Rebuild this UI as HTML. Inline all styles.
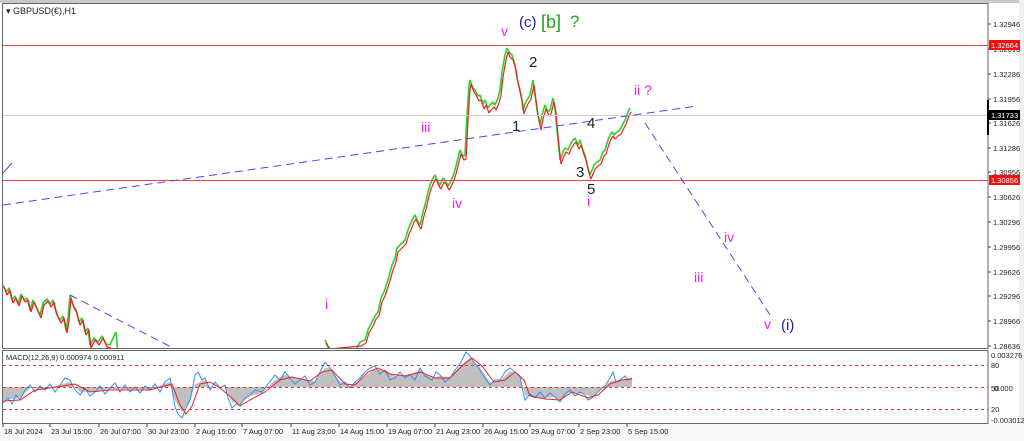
<!DOCTYPE html>
<html><head><meta charset="utf-8"><style>
html,body{margin:0;padding:0;background:#fff;width:1024px;height:441px;overflow:hidden}
svg text{font-family:"Liberation Sans",sans-serif}
</style></head><body>
<svg width="1024" height="441" viewBox="0 0 1024 441" xmlns="http://www.w3.org/2000/svg">
<rect x="0" y="0" width="1024" height="441" fill="#fff"/>
<rect x="0" y="0" width="1024" height="3" fill="#c8c8c8"/>
<rect x="1019" y="0" width="5" height="441" fill="#f0f0f0"/>
<rect x="0" y="424" width="1024" height="17" fill="#f8f8f8"/>
<defs><clipPath id="c1"><rect x="3" y="4" width="985" height="344"/></clipPath></defs>
<g clip-path="url(#c1)" fill="none" stroke-linejoin="bevel">
<polyline stroke="#30d030" stroke-width="1.6" points="3,285 6,292 9,288 12,300 15,296 18,304 21,294 24,300 27,298 30,310 33,300 36,306 40,315 43,303 47,299 50,304 53,300 56,312 60,320 63,316 66,330 68,318 70,295 73,305 76,310 79,322 82,318 85,332 88,328 90,345 94,338 98,342 102,336 106,344 110,345 113,338 116,332 118,352"/>
<polyline stroke="#f02020" stroke-width="1.3" points="4,287 7,295 10,290 13,303 16,298 19,306 22,296 25,302 28,300 31,312 34,302 37,309 41,318 44,305 48,301 51,307 54,302 57,315 61,323 64,318 67,333 69,320 71,298 74,308 77,313 80,325 83,320 86,335 89,330 91,348 95,340 99,345 103,338 107,347 111,348"/>
<polyline stroke="#30d030" stroke-width="1.6" points="325,340 328,346 333,352 355,352 360,342 365,340 368,330 372,322 375,316 378,312 381,298 384,292 388,280 392,265 395,258 397,248 401,244 405,240 408,230 410,225 413,218 415,215 418,222 420,225 423,212 425,205 428,192 430,185 433,178 435,175 438,182 440,185 443,178 445,180 448,186 450,183 453,176 455,170 458,158 460,150 463,156 465,155 467,115 469,85 470,80 473,88 475,90 478,96 480,95 483,104 485,100 488,108 490,105 493,102 495,105 498,98 500,90 502,72 505,55 507,48 509,52 512,55 515,65 517,78 520,90 522,100 523,110 525,104 527,100 530,95 533,80 535,95 537,110 540,125 542,115 545,105 548,112 550,110 553,98 555,108 556,120 558,140 560,160 563,152 565,148 568,150 570,145 573,140 575,138 578,145 580,140 583,150 585,155 588,168 590,175 592,170 594,165 597,162 600,160 603,152 605,150 608,140 610,135 612,132 614,135 617,132 620,130 623,124 625,120 628,112 630,108"/>
<polyline stroke="#f02020" stroke-width="1.2" points="326,343 329,349 361,346 366,343 369,333 373,326 376,319 379,316 382,302 385,296 389,284 393,270 396,262 398,252 402,248 406,244 409,234 411,230 414,222 416,219 419,226 421,229 424,216 426,209 429,196 431,189 434,182 436,179 439,186 441,189 444,182 446,184 449,190 451,187 454,180 456,174 459,162 461,154 464,160 466,159 468,120 470,90 471,84 474,92 476,95 479,101 481,100 484,109 486,105 489,113 491,110 494,107 496,110 499,103 501,95 503,77 506,60 508,52 510,57 513,60 516,70 518,83 521,96 523,106 524,114 526,108 528,104 531,99 534,85 536,100 538,115 541,130 543,119 546,109 549,116 551,114 554,102 556,112 557,125 559,145 561,164 564,156 566,152 569,154 571,149 574,144 576,142 579,149 581,145 584,155 586,160 589,173 591,179 593,174 595,169 598,166 601,164 604,156 606,154 609,144 611,139 613,136 615,139 618,136 621,134 624,128 626,124 629,116 631,112"/>
</g>
<line x1="3" y1="45.5" x2="988" y2="45.5" stroke="#f04040" stroke-width="1"/>
<line x1="3" y1="180.5" x2="988" y2="180.5" stroke="#f04040" stroke-width="1"/>
<line x1="3" y1="115.5" x2="988" y2="115.5" stroke="#d0d0d0" stroke-width="1"/>
<line x1="3" y1="205" x2="697" y2="106" stroke="#4848f0" stroke-width="1" stroke-dasharray="8,5"/>
<line x1="645" y1="123" x2="772" y2="318" stroke="#4848f0" stroke-width="1" stroke-dasharray="8,5"/>
<line x1="70" y1="295" x2="173" y2="348" stroke="#4848f0" stroke-width="1" stroke-dasharray="8,5"/>
<line x1="3" y1="173" x2="12" y2="163" stroke="#4848f0" stroke-width="1"/>
<g font-size="15">
<text x="519" y="27" fill="#2020b0">(c)</text>
<text x="541" y="28" fill="#20a020" font-size="18">[b]</text>
<text x="570" y="27" fill="#20a020" font-size="17">?</text>
<text x="501" y="36" fill="#f020f0" font-size="14">v</text>
<text x="529" y="67" fill="#222">2</text>
<text x="634" y="95" fill="#f020f0" font-size="14">ii ?</text>
<text x="421" y="132" fill="#f020f0" font-size="14">iii</text>
<text x="512" y="131" fill="#222">1</text>
<text x="587" y="128" fill="#222">4</text>
<text x="576" y="177" fill="#222">3</text>
<text x="587" y="194" fill="#222">5</text>
<text x="587" y="206" fill="#f020f0" font-size="14">i</text>
<text x="452" y="208" fill="#f020f0" font-size="14">iv</text>
<text x="724" y="242" fill="#f020f0" font-size="14">iv</text>
<text x="694" y="282" fill="#f020f0" font-size="14">iii</text>
<text x="764" y="329" fill="#f020f0" font-size="14">v</text>
<text x="781" y="330" fill="#2020b0">(i)</text>
<text x="325" y="309" fill="#f020f0" font-size="14">i</text>
</g>
<text x="6" y="14" font-size="9" fill="#222">▾ GBPUSD(€),H1</text>
<rect x="2.5" y="3.5" width="985.5" height="345" fill="none" stroke="#666"/>
<rect x="2.5" y="350.5" width="985.5" height="73" fill="none" stroke="#666"/>
<!-- MACD -->
<polygon fill="#c0c0c0" points="3,387 3,400 20,398 30,388 45,389 70,382 80,392 95,391 110,389 150,389 170,382 175,400 182,412 190,402 195,384 205,380 210,388 225,386 232,402 240,404 250,396 262,393 275,380 285,375 300,379 315,381 325,368 330,368 340,382 350,386 360,380 375,369 385,370 395,376 410,375 420,370 432,378 440,376 450,377 462,364 470,358 480,368 490,382 500,381 510,371 520,376 525,395 535,398 545,398 555,397 560,400 570,392 585,394 592,397 600,391 610,381 620,380 632,378 632,387"/>
<polyline fill="none" stroke="#3090f0" stroke-width="1" points="3,403 8,398 12,404 16,395 20,400 25,390 30,385 35,392 40,386 45,390 50,384 55,392 60,385 65,378 70,380 75,390 80,395 85,388 90,396 95,392 100,386 105,394 110,388 115,383 120,392 125,385 130,392 135,387 140,393 145,386 150,390 155,384 160,392 165,382 170,378 173,395 175,407 178,414 182,418 186,408 190,400 193,386 195,375 198,372 202,380 205,378 208,385 210,390 215,382 220,388 225,385 228,398 232,408 236,404 240,405 245,398 250,395 255,390 262,392 268,384 275,375 280,380 285,372 290,378 295,384 300,380 305,376 310,385 315,382 320,372 325,362 330,368 335,376 340,385 345,382 350,388 355,382 360,378 365,372 370,368 375,366 380,374 385,370 390,380 395,378 400,372 405,378 410,375 415,380 420,368 425,376 432,380 436,372 440,375 445,382 450,378 455,370 460,364 462,360 466,352 470,356 475,364 480,370 485,378 490,385 495,380 500,380 505,372 510,368 515,372 520,376 523,392 525,400 530,394 535,398 540,392 545,398 550,393 555,397 560,402 565,394 570,390 575,396 580,392 585,395 588,400 592,398 596,394 600,390 605,386 610,378 613,372 616,382 620,380 625,376 628,380 632,378"/>
<polyline fill="none" stroke="#f02020" stroke-width="1" points="3,401 20,400 35,390 50,388 75,384 90,392 110,390 150,390 172,384 180,405 186,414 192,406 200,384 210,382 220,388 232,398 240,406 250,400 265,392 280,380 292,377 310,381 322,372 332,370 345,384 355,385 368,372 378,368 390,374 405,376 420,372 435,378 450,378 462,366 472,358 482,366 494,382 505,380 515,372 524,380 530,396 545,399 560,400 572,392 588,398 598,395 610,384 622,380 632,379"/>
<line x1="3" y1="365.5" x2="988" y2="365.5" stroke="#f03030" stroke-dasharray="3,3"/>
<line x1="3" y1="387.5" x2="988" y2="387.5" stroke="#f03030" stroke-dasharray="3,3"/>
<line x1="3" y1="409.5" x2="988" y2="409.5" stroke="#f03030" stroke-dasharray="3,3"/>
<text x="6" y="360" font-size="7.5" fill="#222">MACD(12,26,9) 0.000974 0.000911</text>
<!-- price axis -->
<g stroke="#444">
<line x1="988" y1="24" x2="991" y2="24"/><line x1="988" y1="49" x2="991" y2="49"/><line x1="988" y1="74" x2="991" y2="74"/><line x1="988" y1="99" x2="991" y2="99"/><line x1="988" y1="123" x2="991" y2="123"/><line x1="988" y1="148" x2="991" y2="148"/><line x1="988" y1="172" x2="991" y2="172"/><line x1="988" y1="197" x2="991" y2="197"/><line x1="988" y1="222" x2="991" y2="222"/><line x1="988" y1="247" x2="991" y2="247"/><line x1="988" y1="272" x2="991" y2="272"/><line x1="988" y1="296" x2="991" y2="296"/><line x1="988" y1="321" x2="991" y2="321"/><line x1="988" y1="346" x2="991" y2="346"/>
</g>
<g font-size="7.5" fill="#222">
<text x="993" y="27">1.32946</text><text x="993" y="52">1.32616</text><text x="993" y="77">1.32286</text><text x="993" y="102">1.31956</text><text x="993" y="126">1.31626</text><text x="993" y="151">1.31286</text><text x="993" y="175">1.30956</text><text x="993" y="200">1.30626</text><text x="993" y="225">1.30296</text><text x="993" y="250">1.29956</text><text x="993" y="275">1.29626</text><text x="993" y="299">1.29296</text><text x="993" y="324">1.28966</text><text x="993" y="349">1.28636</text>
</g>
<rect x="989" y="40" width="31" height="10" fill="#f01010"/>
<text x="991" y="48" font-size="7.5" fill="#fff">1.32664</text>
<rect x="989" y="110" width="31" height="10" fill="#000"/>
<text x="991" y="118" font-size="7.5" fill="#fff">1.31733</text>
<rect x="987" y="100" width="2" height="35" fill="#000"/>
<rect x="989" y="175" width="31" height="10" fill="#f01010"/>
<text x="991" y="183" font-size="7.5" fill="#fff">1.30856</text>
<g font-size="7.5" fill="#222">
<text x="991" y="358">0.003276</text>
<text x="991" y="368">80</text>
<text x="991" y="391">50</text><text x="994" y="391">0.000</text>
<text x="991" y="412">20</text>
<text x="991" y="423">-0.003012</text>
</g>
<g stroke="#444">
<line x1="3" y1="424" x2="3" y2="427"/><line x1="50" y1="424" x2="50" y2="427"/><line x1="99" y1="424" x2="99" y2="427"/><line x1="147" y1="424" x2="147" y2="427"/><line x1="195" y1="424" x2="195" y2="427"/><line x1="242" y1="424" x2="242" y2="427"/><line x1="291" y1="424" x2="291" y2="427"/><line x1="339" y1="424" x2="339" y2="427"/><line x1="387" y1="424" x2="387" y2="427"/><line x1="435" y1="424" x2="435" y2="427"/><line x1="483" y1="424" x2="483" y2="427"/><line x1="530" y1="424" x2="530" y2="427"/><line x1="579" y1="424" x2="579" y2="427"/><line x1="627" y1="424" x2="627" y2="427"/>
</g>
<g font-size="7.5" fill="#222">
<text x="4" y="434">18 Jul 2024</text><text x="51" y="434">23 Jul 15:00</text><text x="100" y="434">26 Jul 07:00</text><text x="148" y="434">30 Jul 23:00</text><text x="196" y="434">2 Aug 15:00</text><text x="243" y="434">7 Aug 07:00</text><text x="292" y="434">11 Aug 23:00</text><text x="340" y="434">14 Aug 15:00</text><text x="388" y="434">19 Aug 07:00</text><text x="436" y="434">21 Aug 23:00</text><text x="484" y="434">26 Aug 15:00</text><text x="531" y="434">29 Aug 07:00</text><text x="580" y="434">2 Sep 23:00</text><text x="628" y="434">5 Sep 15:00</text>
</g>
</svg>
</body></html>
